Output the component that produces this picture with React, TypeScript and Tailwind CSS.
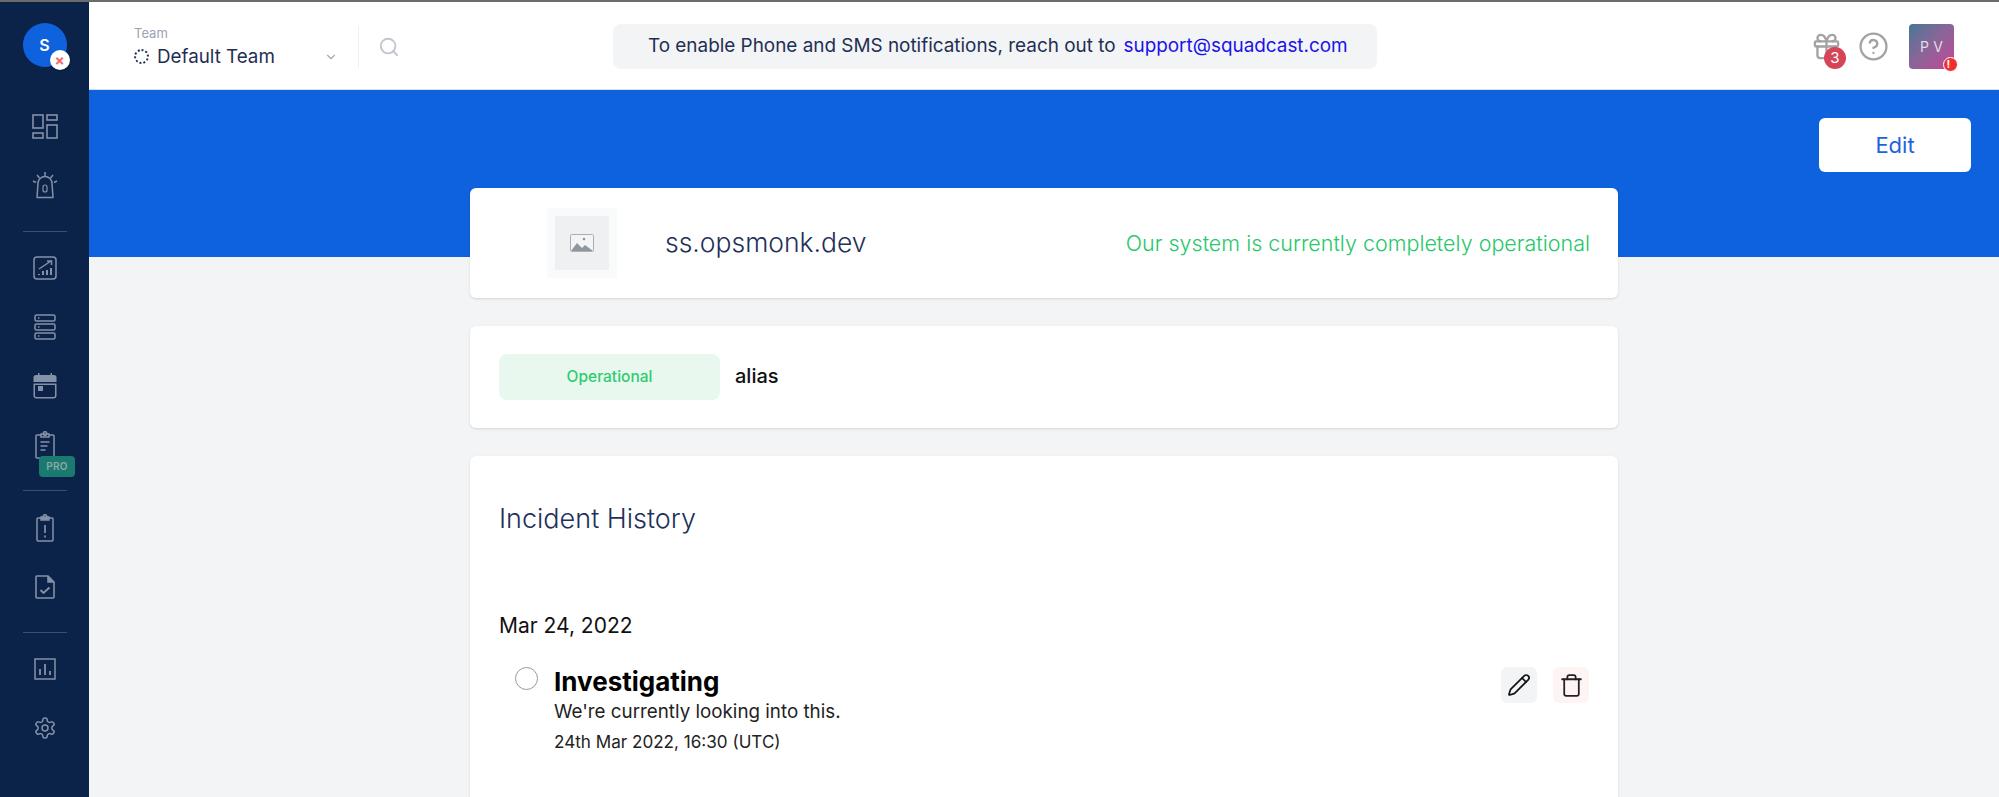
import { ChevronDown, Search, Pencil, Trash, CircleHelp, Gift } from "lucide-react";

const font = { fontFamily: "Inter, sans-serif" };

function NavIcon({ children }: { children: React.ReactNode }) {
  return <div className="flex h-[59px] items-center justify-center text-[#8491a8]">{children}</div>;
}

function Sidebar() {
  return (
    <aside className="flex w-[89px] shrink-0 flex-col items-center bg-[#0c2349] pt-[21px]">
      <div className="relative mb-[30px] flex h-11 w-11 items-center justify-center rounded-full bg-[#0f62dd] text-[16px] font-semibold text-white">
        S
        <span className="absolute -right-[3px] -bottom-[3px] flex h-5 w-5 items-center justify-center rounded-full bg-white text-[15px] font-bold leading-none text-[#f26d6d] shadow">
          ×
        </span>
      </div>
      <div className="w-full">
        <NavIcon>
          <svg width="26" height="26" viewBox="0 0 26 26" fill="none" stroke="currentColor" strokeWidth="1.6">
            <rect x="1" y="1" width="10" height="13" />
            <rect x="15" y="1" width="10" height="5" />
            <rect x="1" y="19" width="10" height="5" />
            <rect x="15" y="11" width="10" height="13" />
          </svg>
        </NavIcon>
        <NavIcon>
          <svg width="26" height="27" viewBox="0 0 26 27" fill="none" stroke="currentColor" strokeWidth="1.5">
            <path d="M5 25.500l1-14a7 7 0 0 1 14 0l1 14z" strokeLinejoin="round" />
            <path d="M1 9l3 1.500M25 9l-3 1.500M5 3l2.500 3M21 3l-2.500 3M13 0v4" />
            <rect x="11" y="13" width="4" height="7" rx="2" strokeWidth="1.200" />
          </svg>
        </NavIcon>
      </div>
      <div className="mb-[6px] mt-[16px] h-px w-11 bg-[#3d4f6e]" />
      <NavIcon>
        <svg width="24" height="24" viewBox="0 0 24 24" fill="none" stroke="currentColor" strokeWidth="1.500">
          <rect x="1" y="1" width="22" height="22" rx="3" />
          <path d="M6 13L18 5M14 5h4.500v4" />
          <path d="M6 19v-1M10 19v-4M14 19v-5M18 19v-7" strokeWidth="2" />
        </svg>
      </NavIcon>
      <NavIcon>
        <svg width="24" height="26" viewBox="0 0 24 26" fill="none" stroke="currentColor" strokeWidth="1.500">
          <rect x="2" y="1" width="20" height="6" rx="1.500" />
          <rect x="2" y="10" width="20" height="6" rx="1.500" />
          <rect x="2" y="19" width="20" height="6" rx="1.500" />
          <path d="M5 4h1.500M5 13h1.500M5 22h1.500" />
        </svg>
      </NavIcon>
      <NavIcon>
        <svg width="24" height="26" viewBox="0 0 24 26" fill="currentColor">
          <path d="M5 0h1.500v3H5zM17.500 0H19v3h-1.500z" />
          <path d="M3 2h18a2.500 2.500 0 0 1 2.500 2.500V9H.5V4.500A2.500 2.500 0 0 1 3 2z" />
          <path d="M.5 10.500h23v12a3 3 0 0 1-3 3h-17a3 3 0 0 1-3-3zm1.500 1.500v10.500a1.500 1.500 0 0 0 1.500 1.500h17a1.500 1.500 0 0 0 1.500-1.500V12z" fillRule="evenodd" />
          <rect x="5" y="13" width="5" height="5" />
        </svg>
      </NavIcon>
      <div className="relative w-full">
        <NavIcon>
          <svg width="20" height="28" viewBox="0 0 20 28" fill="none" stroke="currentColor" strokeWidth="1.500">
            <path d="M6 4H2a1 1 0 0 0-1 1v21a1 1 0 0 0 1 1h16a1 1 0 0 0 1-1V5a1 1 0 0 0-1-1h-4" />
            <rect x="6" y="3" width="8" height="3" />
            <circle cx="10" cy="2.500" r="1.800" />
            <path d="M5.500 11h9M5.500 15h7M5.500 19h5" />
          </svg>
        </NavIcon>
        <span className="absolute left-[39px] top-[41px] flex h-[21px] w-[36px] items-center justify-center rounded-[4px] bg-[#1a7a70] text-[10px] font-semibold tracking-wide text-[#8ea8a8]">
          PRO
        </span>
      </div>
      <div className="mb-[7px] mt-[16px] h-px w-11 bg-[#3d4f6e]" />
      <NavIcon>
        <svg width="18" height="28" viewBox="0 0 18 28" fill="none" stroke="currentColor" strokeWidth="1.500">
          <path d="M5 4H2a1 1 0 0 0-1 1v21a1 1 0 0 0 1 1h14a1 1 0 0 0 1-1V5a1 1 0 0 0-1-1h-3" />
          <rect x="5" y="3" width="8" height="3" fill="currentColor" />
          <circle cx="9" cy="2.500" r="1.800" />
          <path d="M9 11v8M9 21.500v2" strokeWidth="1.700" />
        </svg>
      </NavIcon>
      <NavIcon>
        <svg width="20" height="24" viewBox="0 0 20 24" fill="none" stroke="currentColor" strokeWidth="1.600">
          <path d="M13 1H2a1 1 0 0 0-1 1v20a1 1 0 0 0 1 1h16a1 1 0 0 0 1-1V7z" />
          <path d="M13 1v6h6" fill="currentColor" />
          <path d="M5.500 15l3 3 6-5.500" strokeWidth="1.900" />
        </svg>
      </NavIcon>
      <div className="mb-[6px] mt-[16px] h-px w-11 bg-[#3d4f6e]" />
      <NavIcon>
        <svg width="22" height="22" viewBox="0 0 22 22" fill="none" stroke="currentColor" strokeWidth="1.500">
          <rect x="1" y="1" width="20" height="20" />
          <path d="M6 17v-6M11 17V6M16 17v-4" strokeWidth="1.800" />
        </svg>
      </NavIcon>
      <NavIcon>
        <svg width="24" height="24" viewBox="0 0 24 24" fill="none" stroke="currentColor" strokeWidth="1.500" strokeLinecap="round" strokeLinejoin="round">
          <path d="M12.220 2h-.44a2 2 0 0 0-2 2v.18a2 2 0 0 1-1 1.730l-.43.25a2 2 0 0 1-2 0l-.15-.08a2 2 0 0 0-2.730.73l-.22.380a2 2 0 0 0 .73 2.730l.15.1a2 2 0 0 1 1 1.720v.51a2 2 0 0 1-1 1.740l-.15.09a2 2 0 0 0-.73 2.730l.22.380a2 2 0 0 0 2.730.730l.15-.08a2 2 0 0 1 2 0l.43.250a2 2 0 0 1 1 1.730V20a2 2 0 0 0 2 2h.44a2 2 0 0 0 2-2v-.18a2 2 0 0 1 1-1.730l.43-.250a2 2 0 0 1 2 0l.15.08a2 2 0 0 0 2.730-.730l.22-.390a2 2 0 0 0-.73-2.730l-.15-.08a2 2 0 0 1-1-1.740v-.5a2 2 0 0 1 1-1.740l.15-.09a2 2 0 0 0 .73-2.730l-.22-.380a2 2 0 0 0-2.730-.730l-.15.08a2 2 0 0 1-2 0l-.43-.250a2 2 0 0 1-1-1.730V4a2 2 0 0 0-2-2z" />
          <circle cx="12" cy="12" r="3" />
        </svg>
      </NavIcon>
    </aside>
  );
}

function Header() {
  return (
    <header className="flex h-[88px] shrink-0 items-center border-b border-[#d5e0f0] bg-white px-[45px] pt-[2px]">
      <div className="flex h-[42px] w-[225px] border-r border-[#eef0f3]">
        <div className="w-[204px]">
          <div className="text-[13px] leading-[14px] text-[#9aa3b5]">Team</div>
          <div className="mt-[6px] flex items-center">
            <span className="h-[15px] w-[15px] rounded-full border-2 border-dotted border-[#1f2f52]" />
            <span className="ml-2 text-[18.800px] leading-[22px] text-[#1f2f52]">Default Team</span>
            <ChevronDown className="ml-auto text-[#a0a8b8]" size={14} />
          </div>
        </div>
      </div>
      <Search className="ml-[19px] text-[#c0c6d2]" size={22} />
      <div className="ml-[213px] flex h-[45px] w-[764px] items-center rounded-[8px] bg-[#f3f4f6] pl-[35px] text-[18.900px] text-[#1f2f52]">
        To enable Phone and SMS notifications, reach out to
        <span className="ml-[8px] text-[#1a12e8]">support@squadcast.com</span>
      </div>
      <div className="ml-auto flex items-center">
        <div className="relative">
          <Gift className="text-[#a3a3a3]" size={31} strokeWidth={1.800} />
          <span className="absolute -bottom-[7px] -right-[4px] flex h-[22px] w-[22px] items-center justify-center rounded-full bg-[#d64458] text-[15px] text-white">
            3
          </span>
        </div>
        <CircleHelp className="ml-[16px] text-[#a3a3a3]" size={31} strokeWidth={1.800} />
        <div className="relative ml-[20px] flex h-[45px] w-[45px] items-center justify-center rounded-[4px] bg-gradient-to-br from-[#3f7696] to-[#c2409a] pl-[4px] text-[14px] tracking-[0.3em] text-[#e3dce8]">
          PV
          <span className="absolute -bottom-[3px] -right-[4px] flex h-[15px] w-[15px] items-center justify-center rounded-full border border-white bg-[#f03030] text-[11px] font-bold leading-none text-white">
            !
          </span>
        </div>
      </div>
    </header>
  );
}

export default function App() {
  return (
    <div className="h-[797px] overflow-hidden bg-[#f3f4f6]" style={font}>
      <div className="h-[2px] bg-[#6b6b6b]" />
      <div className="flex h-[795px]">
        <Sidebar />
        <div className="flex min-w-0 flex-1 flex-col">
          <Header />
          <div className="flex-1">
            <div className="flex h-[167px] justify-end bg-[#0f62dd] pr-[28px] pt-[28px]">
              <button className="h-[54px] w-[152px] rounded-[6px] bg-white text-[22px] text-[#1b64dd]">Edit</button>
            </div>
            <div className="mx-auto -mt-[69px] w-[1148px]">
              <div className="flex h-[110px] items-center rounded-[6px] bg-white pl-[77px] pr-[28px] shadow-sm">
                <div className="flex h-[70px] w-[70px] items-center justify-center bg-[#f9fafb]">
                  <div className="flex h-[54px] w-[54px] items-center justify-center bg-[#eef0f2]">
                    <svg width="24" height="18" viewBox="0 0 24 18" fill="none">
                      <rect x="0.500" y="0.500" width="23" height="17" rx="1" fill="#f3f4f6" stroke="#a9afb6" />
                      <path d="M1 17l6-8 5 5 3-3 8 6z" fill="#8f969e" />
                      <circle cx="14" cy="5" r="1.300" fill="#8f969e" />
                    </svg>
                  </div>
                </div>
                <span className="ml-[48px] text-[26.500px] font-light text-[#1f3158]">ss.opsmonk.dev</span>
                <span className="ml-auto text-[21.500px] font-light text-[#27c76a]">Our system is currently completely operational</span>
              </div>
              <div className="mt-[28px] flex h-[102px] items-start rounded-[6px] bg-white pl-[29px] pt-[28px] shadow-sm">
                <div className="flex h-[46px] w-[221px] items-center justify-center rounded-[8px] bg-[#e8f8ee] text-[15.500px] font-medium text-[#2ecc71]">
                  Operational
                </div>
                <span className="ml-[15px] mt-[11px] text-[20px] font-medium leading-[22px] text-[#111]">alias</span>
              </div>
              <div className="mt-[28px] h-[400px] rounded-[6px] bg-white pl-[29px] pr-[29px] pt-[47px] shadow-sm">
                <h2 className="text-[27px] font-light leading-[32px] text-[#1f3158]">Incident History</h2>
                <div className="mt-[78px] text-[21px] leading-[26px] text-[#111]">Mar 24, 2022</div>
                <div className="mt-[28px] flex items-start pl-[16px]">
                  <span className="h-[23px] w-[23px] rounded-full border border-[#9a9a9a]" />
                  <div className="ml-[16px] flex-1">
                    <div className="text-[26px] font-bold leading-[30px] text-black">Investigating</div>
                    <div className="mt-[4px] text-[18.800px] leading-[22px] text-[#222]">We're currently looking into this.</div>
                    <div className="mt-[9px] text-[17.100px] leading-[20px] text-[#222]">24th Mar 2022, 16:30 (UTC)</div>
                  </div>
                  <div className="flex gap-[16px]">
                    <button className="flex h-9 w-9 items-center justify-center rounded-[6px] bg-[#f3f4f6]">
                      <Pencil size={24} color="#111" strokeWidth={1.700} />
                    </button>
                    <button className="flex h-9 w-9 items-center justify-center rounded-[6px] bg-[#fff4f4]">
                      <Trash size={25} color="#222" strokeWidth={1.700} />
                    </button>
                  </div>
                </div>
              </div>
            </div>
          </div>
        </div>
      </div>
    </div>
  );
}
